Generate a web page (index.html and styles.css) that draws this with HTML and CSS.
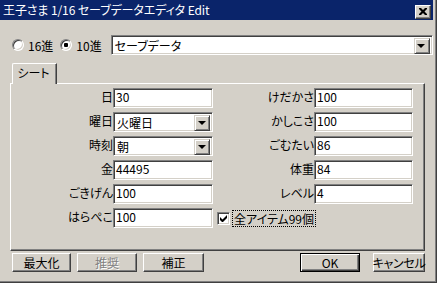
FILE: index.html
```html
<!DOCTYPE html>
<html lang="ja">
<head>
<meta charset="utf-8">
<link rel="stylesheet" href="styles.css">
</head>
<body>
<div class="window">
  <div class="titlebar">
    <span class="title">王子さま 1/16 セーブデータエディタ Edit</span>
    <span class="close"><svg width="8" height="7" viewBox="0 0 8 7"><path d="M0 0h2l2 2 2-2h2v1l-2.5 2.5L8 6v1H6L4 5 2 7H0V6l2.5-2.5L0 1z" fill="#000"/></svg></span>
  </div>
  <div class="content">
    <div class="toprow">
      <label class="radio"><span class="rb"></span><span class="rtext">16進</span></label>
      <label class="radio"><span class="rb checked"></span><span class="rtext">10進</span></label>
      <div class="combo wide"><span class="val">セーブデータ</span><span class="drop"><span class="arrow"></span></span></div>
    </div>
    <div class="tabs">
      <div class="tabstrip"><div class="tab">シート</div></div>
      <div class="panel">
        <div class="grid">
          <span class="lbl">日</span><span class="field">30</span>
          <span class="lbl">けだかさ</span><span class="field">100</span>

          <span class="lbl">曜日</span><span class="combo"><span class="val">火曜日</span><span class="drop"><span class="arrow"></span></span></span>
          <span class="lbl">かしこさ</span><span class="field">100</span>

          <span class="lbl">時刻</span><span class="combo"><span class="val">朝</span><span class="drop"><span class="arrow"></span></span></span>
          <span class="lbl">ごむたい</span><span class="field">86</span>

          <span class="lbl">金</span><span class="field">44495</span>
          <span class="lbl">体重</span><span class="field">84</span>

          <span class="lbl">ごきげん</span><span class="field">100</span>
          <span class="lbl">レベル</span><span class="field">4</span>

          <span class="lbl">はらぺこ</span><span class="field">100</span>
          <label class="check"><span class="cb"><svg width="7" height="7" viewBox="0 0 7 7"><path d="M0 2v3l2 2h1l4-4V0L2.5 4.5z" fill="#000"/></svg></span><span class="ctext">全アイテム99個</span></label>
        </div>
      </div>
    </div>
    <div class="buttons">
      <span class="btn b1">最大化</span>
      <span class="btn b2 disabled">推奨</span>
      <span class="btn b3">補正</span>
      <span class="spacer"></span>
      <span class="btn default ok">OK</span>
      <span class="btn cancel">キャンセル</span>
    </div>
  </div>
</div>
</body>
</html>
```
FILE: styles.css
```css
* { box-sizing: border-box; }
html, body { margin: 0; padding: 0; }
body {
  width: 437px;
  height: 283px;
  overflow: hidden;
  background: #d4d0c8;
  font-family: "Noto Sans CJK JP", sans-serif;
  font-size: 12px;
  font-feature-settings: "palt";
  color: #000;
}
.window {
  width: 437px;
  height: 283px;
  background: #d4d0c8;
  border-right: 1px solid #404040;
  border-bottom: 1px solid #404040;
  box-shadow: inset -1px -1px #808080;
  display: flex;
  flex-direction: column;
}
.titlebar {
  height: 20px;
  margin-right: 3px;
  background: #0a246a;
  color: #fff;
  display: flex;
  align-items: center;
  padding-left: 3px;
  padding-right: 2px;
}
.title {
  flex: 1;
  line-height: 20px;
  white-space: nowrap;
  letter-spacing: -0.1px;
}
.close {
  width: 16px;
  height: 14px;
  margin-top: 4px;
  background: #d4d0c8;
  border: 1px solid;
  border-color: #fff #404040 #404040 #fff;
  box-shadow: inset -1px -1px #808080;
  display: flex;
  align-items: center;
  justify-content: center;
}
.close svg { display: block; margin-top: -1px; }
.content {
  padding: 15px 0 0 10px;
  display: flex;
  flex-direction: column;
}
.toprow {
  display: flex;
  align-items: center;
  height: 20px;
}
.radio {
  display: flex;
  align-items: center;
}
.rb {
  width: 12px;
  height: 12px;
  margin-left: 2px;
  border-radius: 50%;
  background: #fff;
  border: 1px solid;
  border-color: #808080 #fff #fff #808080;
  box-shadow: inset 1px 1px #404040, inset -1px -1px #d4d0c8;
  display: flex;
  align-items: center;
  justify-content: center;
}
.rb.checked::after {
  content: "";
  width: 4px;
  height: 4px;
  border-radius: 1px;
  background: #000;
}
.rtext { margin-left: 4px; margin-right: 5px; }
.radio + .radio .rtext { margin-right: 9px; }
.combo, .field {
  height: 20px;
  background: #fff;
  border: 1px solid;
  border-color: #808080 #fff #fff #808080;
  box-shadow: inset 1px 1px #404040, inset -1px -1px #d4d0c8;
  display: flex;
  align-items: flex-start;
  padding: 0 2px 0 3px;
  line-height: 16px;
  white-space: nowrap;
}
.field { padding-left: 2px; }
.combo { padding: 2px 2px 2px 3px; }
.combo .val { flex: 1; line-height: 16px; }
.combo.wide { width: 322px; }
.drop {
  width: 16px;
  height: 16px;
  background: #d4d0c8;
  border: 1px solid;
  border-color: #d4d0c8 #404040 #404040 #d4d0c8;
  box-shadow: inset 1px 1px #fff, inset -1px -1px #808080;
  display: flex;
  align-items: center;
  justify-content: center;
}
.arrow {
  width: 0;
  height: 0;
  border-left: 4px solid transparent;
  border-right: 4px solid transparent;
  border-top: 4px solid #000;
  margin-left: -1px;
}
.tabs { margin-top: 8px; }
.tabstrip { height: 20px; display: flex; padding-left: 2px; }
.tab {
  width: 45px;
  height: 21px;
  border-top: 1px solid #fff;
  border-left: 1px solid #fff;
  border-right: 1px solid #404040;
  border-top-left-radius: 2px;
  box-shadow: inset -1px 0 #808080;
  background: #d4d0c8;
  text-align: center;
  line-height: 17px;
  padding-right: 2px;
  position: relative;
  z-index: 1;
}
.panel {
  width: 415px;
  height: 168px;
  border: 1px solid;
  border-color: #fff #404040 #404040 #fff;
  box-shadow: inset -1px -1px #808080;
  padding: 4px 0 0 1px;
}
.grid {
  display: grid;
  grid-template-columns: 101px 100px 101px 99px;
  grid-auto-rows: 20px;
  row-gap: 4px;
}
.lbl {
  text-align: right;
  line-height: 18px;
  white-space: nowrap;
}
.check {
  grid-column: 3 / 5;
  display: flex;
  align-items: center;
  padding-left: 4px;
}
.cb {
  width: 13px;
  height: 13px;
  background: #fff;
  border: 1px solid;
  border-color: #808080 #fff #fff #808080;
  box-shadow: inset 1px 1px #404040, inset -1px -1px #d4d0c8;
  display: flex;
  align-items: center;
  justify-content: center;
}
.ctext {
  margin-left: 3px;
  outline: 1px dotted #000;
  line-height: 15px;
  padding: 0 1px;
}
.buttons {
  display: flex;
  margin-top: 2px;
  padding-left: 2px;
  height: 19px;
}
.btn {
  height: 19px;
  border: 1px solid;
  border-color: #fff #404040 #404040 #fff;
  box-shadow: inset -1px -1px #808080;
  display: flex;
  align-items: center;
  justify-content: center;
  line-height: 16px;
  white-space: nowrap;
}
.b1 { width: 59px; }
.b2 { width: 60px; margin-left: 6px; }
.b3 { width: 61px; margin-left: 6px; }
.disabled { color: #808080; text-shadow: 1px 1px #fff; }
.spacer { flex: 1; }
.ok { width: 60px; }
.default {
  border: 1px solid #000;
  box-shadow: inset 1px 1px #fff, inset -1px -1px #404040, inset -2px -2px #808080;
}
.cancel { width: 52px; margin-left: 13px; margin-right: 11px; letter-spacing: -0.3px; }
```
